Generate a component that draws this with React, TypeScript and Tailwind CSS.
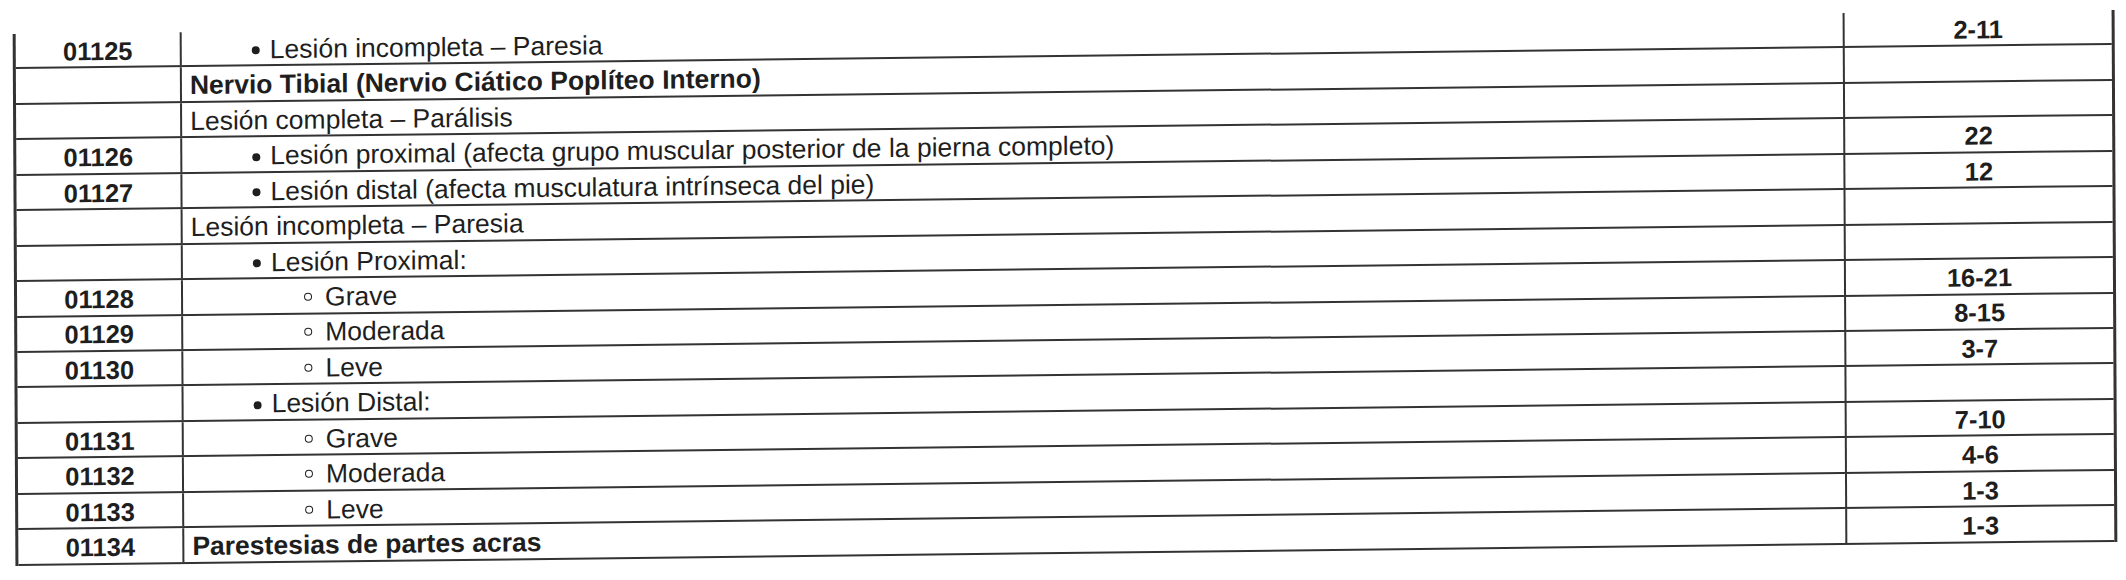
type Row = {
  code?: string;
  text: string;
  level: 0 | 1 | 2;
  bold?: boolean;
  amount?: string;
};

const rows: Row[] = [
  { code: "01125", text: "Lesión incompleta – Paresia", level: 1, amount: "2-11" },
  { text: "Nervio Tibial (Nervio Ciático Poplíteo Interno)", level: 0, bold: true },
  { text: "Lesión completa – Parálisis", level: 0 },
  { code: "01126", text: "Lesión proximal (afecta grupo muscular posterior de la pierna completo)", level: 1, amount: "22" },
  { code: "01127", text: "Lesión distal (afecta musculatura intrínseca del pie)", level: 1, amount: "12" },
  { text: "Lesión incompleta – Paresia", level: 0 },
  { text: "Lesión Proximal:", level: 1 },
  { code: "01128", text: "Grave", level: 2, amount: "16-21" },
  { code: "01129", text: "Moderada", level: 2, amount: "8-15" },
  { code: "01130", text: "Leve", level: 2, amount: "3-7" },
  { text: "Lesión Distal:", level: 1 },
  { code: "01131", text: "Grave", level: 2, amount: "7-10" },
  { code: "01132", text: "Moderada", level: 2, amount: "4-6" },
  { code: "01133", text: "Leve", level: 2, amount: "1-3" },
  { code: "01134", text: "Parestesias de partes acras", level: 0, bold: true, amount: "1-3" },
];

function Description({ row }: { row: Row }) {
  if (row.level === 1) {
    return (
      <div className="whitespace-nowrap pl-[70px] leading-none">
        <span className="mr-[10px] inline-block h-[8px] w-[8px] rounded-full bg-[#1e1e1e] align-[3.5px]" />
        {row.text}
      </div>
    );
  }
  if (row.level === 2) {
    return (
      <div className="whitespace-nowrap pl-[121px] leading-none">
        <span className="mr-[13px] inline-block h-[8px] w-[8px] rounded-full border-[1.5px] border-[#1e1e1e] align-[5px]" />
        {row.text}
      </div>
    );
  }
  return (
    <div className={`whitespace-nowrap pl-[8px] leading-none ${row.bold ? "font-bold" : ""}`}>
      {row.text}
    </div>
  );
}

export default function App() {
  return (
    <main className="h-[580px] w-[2126px] overflow-hidden bg-white font-['Liberation_Sans',Arial,sans-serif] text-[26.5px] text-[#1e1e1e]">
      <div className="ml-[14px] mt-[21.5px] w-[2102px] rotate-[-0.3deg] -skew-y-[0.36deg] border-x-[3px] border-[#333]">
        {rows.map((row, i) => (
          <div
            key={i}
            className="grid h-[35.45px] grid-cols-[166px_1663px_1fr] border-b-2 border-[#333]"
          >
            <div className="flex items-end justify-center border-r-2 border-[#333] pb-[2px] text-[25.5px] font-bold leading-none">
              {row.code}
            </div>
            <div className="flex items-end border-r-2 border-[#333] pb-[2px]">
              <Description row={row} />
            </div>
            <div className="flex items-end justify-center pb-[2px] text-[25.5px] font-bold leading-none">
              {row.amount}
            </div>
          </div>
        ))}
      </div>
    </main>
  );
}
